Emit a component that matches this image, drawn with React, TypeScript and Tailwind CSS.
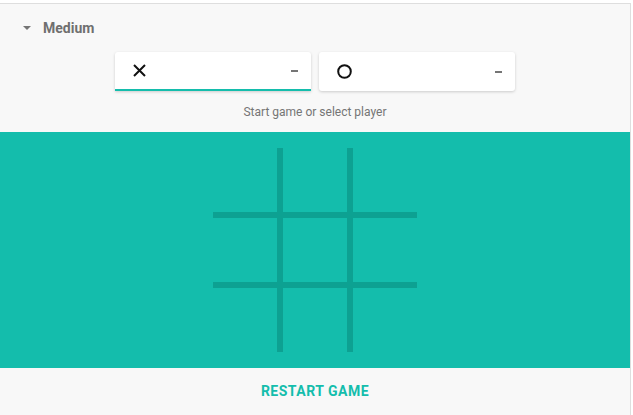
import React from "react";

function XIcon() {
  return (
    <svg width="13" height="13" viewBox="0 0 13 13">
      <path d="M1 1 L12 12 M12 1 L1 12" stroke="#111" strokeWidth="2" strokeLinecap="butt" />
    </svg>
  );
}

function OIcon() {
  return (
    <svg width="15" height="15" viewBox="0 0 15 15">
      <circle cx="7.5" cy="7.5" r="6.3" fill="none" stroke="#111" strokeWidth="2" />
    </svg>
  );
}

function PlayerCard({ icon, active }: { icon: React.ReactNode; active?: boolean }) {
  return (
    <div
      className={`w-[196px] h-[39px] bg-white rounded-[3px] shadow-[0_1px_3px_rgba(0,0,0,0.18)] flex items-center justify-between pl-[18px] pr-[13px] ${
        active ? "border-b-2 border-[#14bdac] rounded-b-none" : ""
      }`}
    >
      <div className="flex items-center">{icon}</div>
      <div className="w-[7px] h-[2px] bg-[#757575]" />
    </div>
  );
}

export default function App() {
  const cells = Array.from({ length: 9 });
  return (
    <div className="w-[633px] h-[415px] bg-white pt-[3px] overflow-hidden" style={{ fontFamily: "Roboto, Arial, sans-serif" }}>
      <div className="w-[631px] h-[412px] bg-[#f8f8f8] border-t border-r border-[#dedede] flex flex-col">
        <div className="h-[48px] flex items-center pl-[23px] shrink-0">
          <div className="w-0 h-0 border-l-[4px] border-r-[4px] border-t-[4px] border-l-transparent border-r-transparent border-t-[#757575]" />
          <span className="ml-[12px] text-[14px] font-bold text-[#6f6f6f]">Medium</span>
        </div>
        <div className="flex justify-center gap-2 shrink-0">
          <PlayerCard icon={<XIcon />} active />
          <PlayerCard icon={<OIcon />} />
        </div>
        <div className="h-[41px] flex items-center justify-center text-[12px] text-[#757575] shrink-0">
          Start game or select player
        </div>
        <div className="h-[236px] bg-[#14bdac] flex items-center justify-center shrink-0">
          <div className="grid grid-cols-[64px_64px_64px] grid-rows-[64px_64px_64px] gap-[6px] bg-[#0da192]">
            {cells.map((_, i) => (
              <div key={i} className="bg-[#14bdac]" />
            ))}
          </div>
        </div>
        <div className="h-[47px] flex items-center justify-center shrink-0">
          <span className="text-[14px] font-bold text-[#14bdac] tracking-[0.5px]">RESTART GAME</span>
        </div>
      </div>
    </div>
  );
}
